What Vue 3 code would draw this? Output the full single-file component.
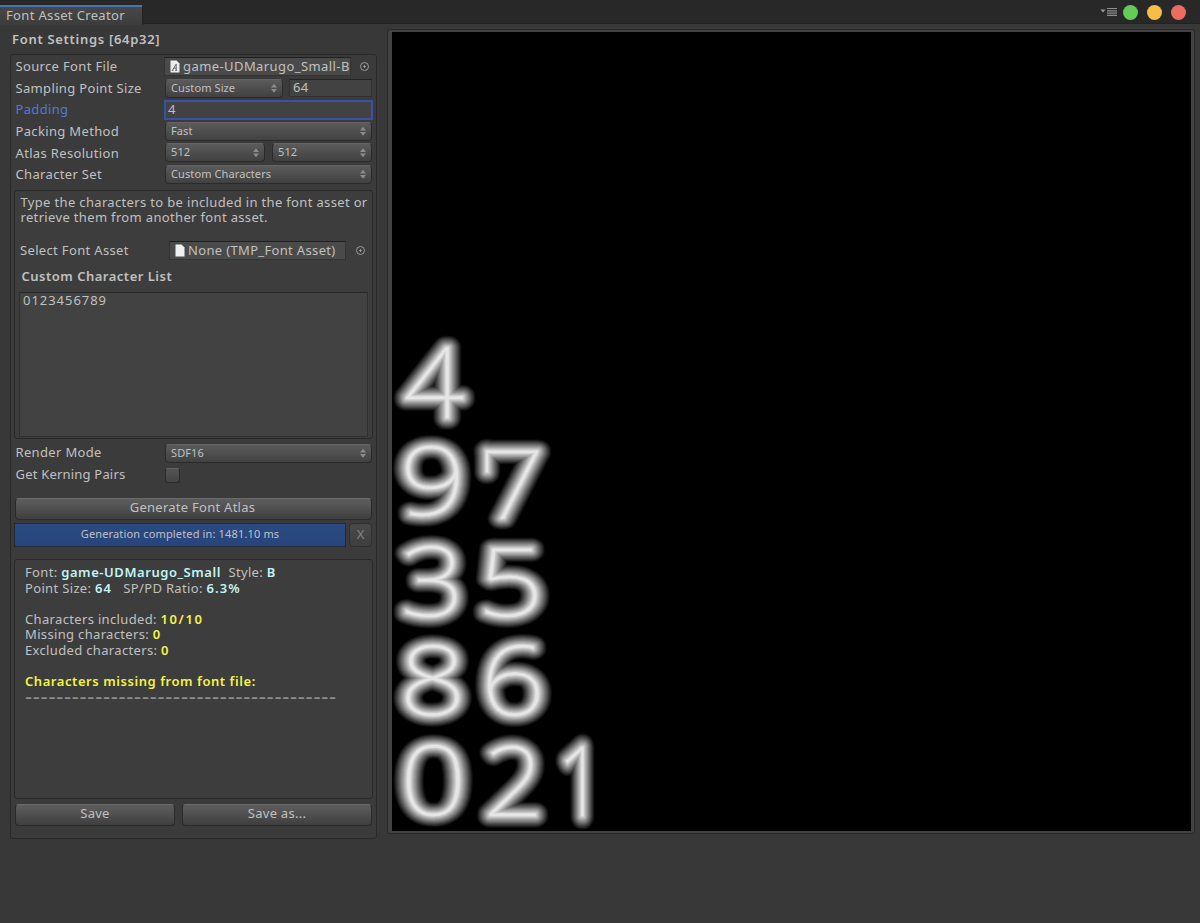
<template>
  <div class="window">
    <header class="titlebar">
      <div class="tab">Font Asset Creator</div>
      <div class="titlebar__controls">
        <svg class="menu-icon" width="18" height="10" viewBox="0 0 18 10" aria-hidden="true">
          <path d="M0.5 2.5h5l-2.5 3z" fill="#9a9a9a" />
          <path d="M7 1.5h10M7 3.8h10M7 6.1h10M7 8.4h10" stroke="#8f8f8f" stroke-width="1.2" />
        </svg>
        <span class="light light--green"></span>
        <span class="light light--yellow"></span>
        <span class="light light--red"></span>
      </div>
    </header>

    <main class="body">
      <section class="settings">
        <h1 class="settings__title">Font Settings [64p32]</h1>

        <div class="panel">
          <div class="row">
            <label class="row__label">Source Font File</label>
            <div class="object-field object-field--source">
              <svg class="object-field__icon" width="10" height="13" viewBox="0 0 10 13">
                <path d="M0.5 0.5h6l3 3v9h-9z" fill="#e9edf0" />
                <path d="M2.4 10.3l3.8-6.2v6.2M3.9 8.2h2.4M1.8 10.3h1.6M5.2 10.3h1.9" fill="none" stroke="#5b5b5b" stroke-width="0.9" />
              </svg>
              <span class="object-field__text">game-UDMarugo_Small-B</span>
            </div>
            <span class="picker picker--source"></span>
          </div>
          <div class="row">
            <label class="row__label row__label--low">Sampling Point Size</label>
            <div class="select select--size">Custom Size<i class="arrows"></i></div>
            <div class="input input--size">64</div>
          </div>
          <div class="row">
            <label class="row__label row__label--active">Padding</label>
            <div class="input input--focus">4</div>
          </div>
          <div class="row">
            <label class="row__label row__label--low">Packing Method</label>
            <div class="select">Fast<i class="arrows"></i></div>
          </div>
          <div class="row">
            <label class="row__label row__label--low">Atlas Resolution</label>
            <div class="select select--half">512<i class="arrows"></i></div>
            <div class="select select--half">512<i class="arrows"></i></div>
          </div>
          <div class="row">
            <label class="row__label row__label--low">Character Set</label>
            <div class="select">Custom Characters<i class="arrows"></i></div>
          </div>

          <div class="charset">
            <p class="charset__help">Type the characters to be included in the font asset or<br />retrieve them from another font asset.</p>
            <div class="charset__asset">
              <label class="charset__label">Select Font Asset</label>
              <div class="object-field object-field--asset">
                <svg class="object-field__icon" width="10" height="13" viewBox="0 0 10 13">
                  <path d="M0.5 0.5h6l3 3v9h-9z" fill="#eef1f3" />
                </svg>
                <span class="object-field__text">None (TMP_Font Asset)</span>
              </div>
              <span class="picker picker--asset"></span>
            </div>
            <h2 class="charset__heading">Custom Character List</h2>
            <div class="charset__list">0123456789</div>
          </div>

          <div class="row row--render">
            <label class="row__label">Render Mode</label>
            <div class="select">SDF16<i class="arrows"></i></div>
          </div>
          <div class="row">
            <label class="row__label row__label--kerning">Get Kerning Pairs</label>
            <span class="checkbox"></span>
          </div>

          <button class="button button--generate">Generate Font Atlas</button>
          <div class="progress">
            <div class="progress__bar">Generation completed in: 1481.10 ms</div>
            <button class="progress__close">X</button>
          </div>

          <div class="report">
            <p>Font: <b class="cyan">game-UDMarugo_Small</b>&nbsp; Style: <b class="cyan">B</b></p>
            <p>Point Size: <b class="cyan digits">64</b>&nbsp;&nbsp; SP/PD Ratio: <b class="cyan digits">6.3%</b></p>
            <p class="gap">Characters included: <b class="yellow count">10/10</b></p>
            <p>Missing characters: <b class="yellow">0</b></p>
            <p>Excluded characters: <b class="yellow">0</b></p>
            <p class="gap"><b class="yellow">Characters missing from font file:</b></p>
            <p class="report__rule">{{ '-'.repeat(40) }}</p>
          </div>

          <div class="actions">
            <button class="button button--save">Save</button>
            <button class="button button--save-as">Save as...</button>
          </div>
        </div>
      </section>

      <section class="preview">
        <svg class="atlas" width="799" height="799" viewBox="392 32 799 799">
          <use v-for="l in layers" :key="l.width" href="#glyphs" :stroke="l.color" :stroke-width="l.width" />
          <g id="glyphs">
            <text v-for="g in glyphs" :key="g.char" class="atlas__glyph" :transform="g.transform">{{ g.char }}</text>
            <rect x="486.2" y="451" width="1.8" height="21" />
          </g>
        </svg>
      </section>
    </main>
  </div>
</template>

<script setup>
// Centre-line box of every packed glyph, in window pixels
const boxes = [
  { char: '4', x: 406, y: 347, w: 57, h: 71 },
  { char: '9', x: 406, y: 445.5, w: 52, h: 70.5 },
  { char: '7', x: 486, y: 449, w: 52, h: 69 },
  { char: '3', x: 406, y: 545.5, w: 51, h: 71 },
  { char: '5', x: 486, y: 547, w: 51, h: 69.5 },
  { char: '8', x: 406.5, y: 645, w: 53, h: 71 },
  { char: '6', x: 487.5, y: 645, w: 52, h: 71 },
  { char: '0', x: 406, y: 744.5, w: 54, h: 71 },
  { char: '2', x: 489, y: 745.5, w: 47.5, h: 70 },
  { char: '1', x: 565.5, y: 746, w: 18, h: 69.5 }
]

const ctx = document.createElement('canvas').getContext('2d')
ctx.font = '100 96px "Noto Sans"'

const glyphs = boxes.map(({ char, x, y, w, h }) => {
  const m = ctx.measureText(char)
  const sx = w / (m.actualBoundingBoxRight + m.actualBoundingBoxLeft)
  const sy = h / (m.actualBoundingBoxAscent + m.actualBoundingBoxDescent)
  return {
    char,
    transform: `translate(${x} ${y}) scale(${sx} ${sy}) translate(${m.actualBoundingBoxLeft} ${m.actualBoundingBoxAscent})`
  }
})

// Distance field: wide dark outlines first, thin bright ones on top
const layers = Array.from({ length: 25 }, (_, i) => {
  const width = 25 - i
  const v = Math.round(238 * (1 - (width / 2 + 0.8) / 13.8))
  return { width, color: `rgb(${v}, ${v}, ${v})` }
})
</script>

<style>
body {
  margin: 0;
  background: #383838;
}
</style>

<style scoped>
* {
  box-sizing: border-box;
}

.window {
  width: 1200px;
  height: 923px;
  overflow: hidden;
  background: #383838;
  color: #c0c0c0;
  font-family: 'Noto Sans', 'Liberation Sans', sans-serif;
  font-size: 13px;
  letter-spacing: 0.34px;
  line-height: 15.6px;
}

.titlebar {
  display: flex;
  justify-content: space-between;
  align-items: flex-start;
  height: 24px;
  background: #282828;
  border-bottom: 1px solid #222;
}

.tab {
  width: 143px;
  height: 20px;
  margin-top: 5px;
  padding: 1px 0 0 6px;
  border-top: 2px solid #4573b5;
  border-right: 1px solid #232323;
  border-radius: 0 2px 0 0;
  background: linear-gradient(#484848, #3c3c3c);
}

.titlebar__controls {
  display: flex;
  align-items: center;
  height: 24px;
  padding-right: 14px;
}

.menu-icon {
  margin-right: 5px;
}

.light {
  width: 15px;
  height: 15px;
  border-radius: 50%;
}

.light + .light {
  margin-left: 9px;
}

.light--green {
  background: #65cb57;
}

.light--yellow {
  background: #f6be45;
}

.light--red {
  background: #ed6b60;
}

.body {
  display: flex;
  align-items: flex-start;
}

.settings {
  width: 377px;
  padding: 8px 0 0 10px;
}

.settings__title {
  height: 22px;
  margin: 0;
  padding-left: 2px;
  font-size: 13px;
  font-weight: 600;
  letter-spacing: 0.7px;
}

.panel {
  width: 367px;
  height: 785px;
  padding: 1px 4px 0;
  border: 1px solid #292929;
  border-radius: 3px;
  background: #3b3b3b;
}

.row {
  display: flex;
  align-items: center;
  height: 21.5px;
}

.row__label {
  flex: none;
  width: 150px;
  padding-left: 0.5px;
}

.row__label--active {
  padding-top: 1px;
  color: #5078dc;
}

.row__label--low {
  padding-top: 2px;
}

.row__label--kerning {
  letter-spacing: 0.2px;
}

.select {
  position: relative;
  flex: 1;
  height: 19px;
  padding-left: 5px;
  border: 1px solid #2a2a2a;
  border-top-color: #646464;
  border-radius: 4px;
  background: linear-gradient(#5b5b5b, #414141);
  font-size: 11px;
  letter-spacing: 0.1px;
  line-height: 16px;
}

.select--size {
  flex: none;
  width: 118px;
  margin-right: 6px;
}

.select--half {
  flex: none;
  width: 100px;
}

.select--half + .select--half {
  margin-left: 7px;
}

.arrows {
  position: absolute;
  top: 4px;
  right: 5px;
  width: 6px;
  height: 9px;
  background: #8c8c8c;
  clip-path: polygon(50% 0, 100% 42%, 0 42%, 0 58%, 100% 58%, 50% 100%, 0 58%, 0 42%);
}

.input {
  height: 18px;
  padding: 0 3px;
  border: 1px solid #303030;
  border-top-color: #242424;
  background: #424242;
}

.input--size {
  flex: 1;
}

.input--focus {
  flex: 1;
  height: 20px;
  margin: 0 -1px;
  padding: 0 2px;
  border: 2px solid #3a52a4;
}

.object-field {
  display: flex;
  align-items: center;
  height: 19px;
  padding-left: 5px;
  overflow: hidden;
  border: 1px solid #333;
  border-top-color: #202020;
  background: #4a4a4a;
  white-space: nowrap;
}

.object-field--source {
  width: 187px;
  margin-left: -1px;
  letter-spacing: 0.42px;
}

.object-field--asset {
  width: 177px;
}

.object-field__icon {
  flex: none;
  margin-right: 3px;
}

.picker {
  flex: none;
  width: 9px;
  height: 9px;
  border: 1px solid #9a9a9a;
  border-radius: 50%;
  background: radial-gradient(circle, #b0b0b0 0.8px, transparent 1.4px);
}

.picker--source {
  margin-left: 9px;
}

.picker--asset {
  margin-left: 10px;
}

.charset {
  width: 359px;
  height: 249px;
  margin: 4.5px 0 0 -1px;
  padding: 4px 3px 0 4px;
  border: 1px solid #292929;
  border-radius: 3px;
  background: #3d3d3d;
}

.charset__help {
  margin: 0;
  padding-left: 1.5px;
  white-space: nowrap;
}

.charset__asset {
  display: flex;
  align-items: center;
  height: 20px;
  margin-top: 15px;
  padding-left: 1px;
}

.charset__label {
  width: 149px;
}

.charset__heading {
  height: 15px;
  margin: 8px 0;
  padding-left: 2.5px;
  font-size: 13px;
  font-weight: 600;
  letter-spacing: 0.5px;
}

.charset__list {
  width: 349px;
  height: 145px;
  padding: 0 3px;
  border: 1px solid #303030;
  border-top-color: #262626;
  background: #424242;
  letter-spacing: 0.96px;
}

.row--render {
  margin-top: 4px;
}

.checkbox {
  width: 15px;
  height: 15px;
  margin-top: 2px;
  border: 1px solid #2a2a2a;
  border-top-color: #646464;
  border-radius: 3px;
  background: linear-gradient(#545454, #444);
}

.button {
  display: block;
  height: 22px;
  padding: 0 0 2px;
  border: 1px solid #2a2a2a;
  border-top-color: #6a6a6a;
  border-radius: 4px;
  background: linear-gradient(#5e5e5e, #3f3f3f);
  color: #c0c0c0;
  font: inherit;
  letter-spacing: 0.26px;
}

.button--generate {
  width: 357px;
  margin-top: 12px;
  padding-right: 2px;
}

.progress {
  display: flex;
  gap: 3px;
  margin-top: 3px;
}

.progress__bar {
  width: 332px;
  height: 24px;
  margin-left: -1px;
  border: 1px solid #232a36;
  background: linear-gradient(#294a83, #27457b);
  font-size: 11px;
  letter-spacing: 0.15px;
  line-height: 19px;
  text-align: center;
}

.progress__close {
  width: 23px;
  height: 24px;
  padding: 0;
  border: 1px solid #303030;
  border-radius: 4px;
  background: linear-gradient(#4a4a4a, #3e3e3e);
  color: #858585;
  font: inherit;
}

.report {
  width: 359px;
  height: 240px;
  margin: 12px 0 0 -1px;
  padding: 5.5px 10px;
  border: 1px solid #292929;
  border-radius: 3px;
  background: #3d3d3d;
}

.report p {
  margin: 0;
  white-space: nowrap;
}

.report b {
  font-weight: 600;
  letter-spacing: 0.56px;
}

.report .gap {
  margin-top: 15.6px;
}

.report .digits {
  letter-spacing: 1.1px;
}

.report .count {
  letter-spacing: 1.6px;
}

.report .report__rule {
  height: 15.6px;
  margin-top: -2px;
  color: #8e8e8e;
  font-size: 22px;
  letter-spacing: 0.71px;
}

.cyan {
  color: #c0f4f4;
}

.yellow {
  color: #f4f442;
}

.actions {
  display: flex;
  gap: 7px;
  margin-top: 5px;
}

.button--save {
  width: 160px;
}

.button--save-as {
  width: 190px;
}

.preview {
  width: 808px;
  height: 805px;
  margin: 5px 0 0 10px;
  padding: 2px 4px;
  border: 1px solid #292929;
  border-radius: 3px;
  background: #424242;
}

.atlas {
  display: block;
  overflow: visible;
  background: #000;
  fill: none;
  stroke-linecap: round;
  stroke-linejoin: round;
}

.atlas__glyph {
  font-family: 'Noto Sans', 'Liberation Sans', sans-serif;
  font-size: 96px;
  font-weight: 100;
  letter-spacing: 0;
  vector-effect: non-scaling-stroke;
}

#glyphs {
  fill: #e6e6e6;
}
</style>
